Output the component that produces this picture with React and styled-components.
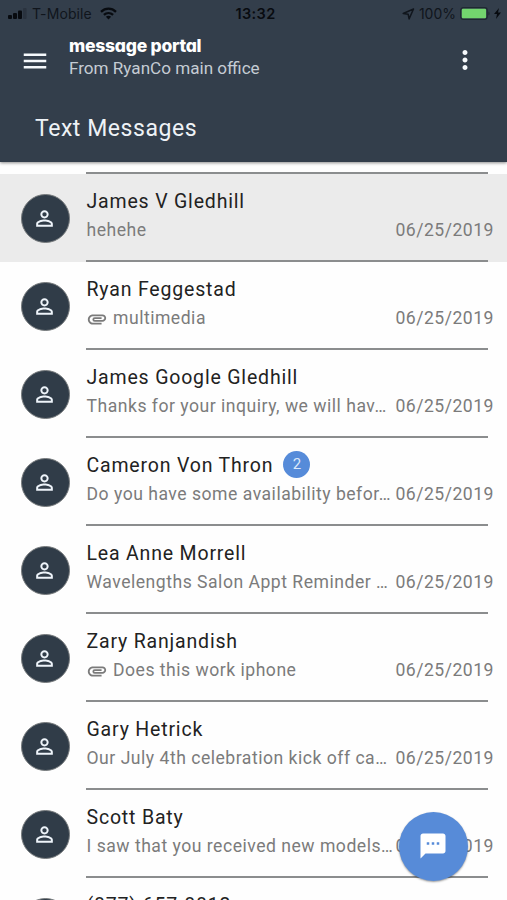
import React from 'react';
import styled, { createGlobalStyle } from 'styled-components';
import { MdAttachment, MdMenu, MdMoreVert, MdPersonOutline, MdSms } from 'react-icons/md';

const GlobalStyle = createGlobalStyle`
  * {
    box-sizing: border-box;
  }

  body {
    margin: 0;
    background: #fefefe;
    font-family: Roboto, sans-serif;
    overflow: hidden;
  }
`;

const Screen = styled.main`
  position: relative;
  height: 900px;
  overflow: hidden;
`;

const Header = styled.header`
  height: 162px;
  background: #333e4b;
  box-shadow: 0 1px 3px rgba(0, 0, 0, 0.45);
`;

const StatusBar = styled.div`
  display: grid;
  grid-template-columns: 1fr auto 1fr;
  align-items: center;
  height: 27px;
  padding: 0 6px 0 8px;
  color: #10151c;
  font-family: Inter, sans-serif;
  font-size: 14px;
`;

const StatusGroup = styled.div`
  display: flex;
  align-items: center;
  justify-content: ${(props) => (props.$end ? 'flex-end' : 'flex-start')};
  gap: ${(props) => (props.$end ? '4px' : '6px')};
`;

const Carrier = styled.span`
  margin: 0 2px 0 -1px;
  letter-spacing: 0.1px;
`;

const Clock = styled.span`
  padding-left: 2px;
  color: #080b10;
  font-weight: 600;
  font-size: 14.5px;
  letter-spacing: 0.4px;
`;

const AppBar = styled.div`
  display: flex;
  align-items: center;
  height: 67px;
  padding: 0 27px 0 20px;
  color: #fff;
`;

const IconButton = styled.button`
  display: flex;
  padding: ${(props) => (props.$raised ? '0 0 2px' : '0')};
  border: 0;
  background: none;
  color: #f6f9fc;
  font-size: 30px;
`;

const Brand = styled.div`
  flex: 1;
  padding: 0 0 6px 19px;
`;

const BrandName = styled.div`
  font-family: Inter, sans-serif;
  font-feature-settings: 'cv11';
  font-size: 17.5px;
  font-weight: 800;
  line-height: 20px;
  letter-spacing: -0.25px;
`;

const BrandOffice = styled.div`
  color: #c5ccd4;
  font-size: 17.1px;
  line-height: 24px;
`;

const Title = styled.h1`
  margin: 0;
  padding: 19px 35px 0;
  color: #eef2f6;
  font-size: 23px;
  font-weight: 400;
  line-height: 32px;
  letter-spacing: 0.55px;
`;

const List = styled.ul`
  margin: 0;
  padding: 10px 0 0;
  list-style: none;
`;

const Divider = styled.div`
  height: 2px;
  margin: 0 19px 0 86px;
  background: #8b8d8e;
`;

const Row = styled.li`
  background: ${(props) => (props.$active ? '#ebebeb' : 'transparent')};
`;

const RowBody = styled.div`
  display: flex;
  align-items: center;
  height: 86px;
  padding: 0 13px 0 20.5px;
`;

const Avatar = styled.div`
  display: flex;
  flex: none;
  align-items: center;
  justify-content: center;
  width: 49px;
  height: 49px;
  margin: 2px 17px 0 0;
  padding-right: 1px;
  border: 1px solid #777b7d;
  border-radius: 50%;
  background: #303c48;
  color: #eef4fa;
  font-size: 25px;
`;

const Content = styled.div`
  flex: 1;
  min-width: 0;
  padding-bottom: 4px;
`;

const NameLine = styled.div`
  display: flex;
  align-items: center;
  height: 30px;
`;

const Name = styled.span`
  color: #222;
  font-size: 19.5px;
  letter-spacing: 0.82px;
`;

const Badge = styled.span`
  width: 27px;
  height: 27px;
  margin: -2px 0 0 10px;
  border-radius: 50%;
  background: #568bd9;
  color: #dce8fa;
  font-size: 15px;
  line-height: 27px;
  text-align: center;
`;

const PreviewLine = styled.div`
  display: flex;
  align-items: center;
  height: 28px;
  color: #7b7b7b;
  font-size: 17.6px;
  letter-spacing: 0.5px;
`;

const Clip = styled(MdAttachment)`
  flex: none;
  margin: 2px 5px 0 -0.5px;
  font-size: 22px;
`;

const Preview = styled.span`
  flex: 1;
  min-width: 0;
  white-space: nowrap;
`;

const SentOn = styled.time`
  flex: none;
`;

const Compose = styled.button`
  position: absolute;
  top: 812px;
  left: 399px;
  display: flex;
  align-items: center;
  justify-content: center;
  width: 69px;
  height: 69px;
  padding: 0 1px 1px 0;
  border: 0;
  border-radius: 50%;
  background: #578bd8;
  box-shadow: 0 1px 2px rgba(0, 0, 0, 0.4);
  color: #fff;
  font-size: 30px;
`;

const messages = [
  { name: 'James V Gledhill', text: 'hehehe', date: '06/25/2019', active: true },
  { name: 'Ryan Feggestad', text: 'multimedia', date: '06/25/2019', clip: true },
  { name: 'James Google Gledhill', text: 'Thanks for your inquiry, we will hav…', date: '06/25/2019' },
  { name: 'Cameron Von Thron', text: 'Do you have some availability befor…', date: '06/25/2019', unread: 2 },
  { name: 'Lea Anne Morrell', text: 'Wavelengths Salon Appt Reminder …', date: '06/25/2019' },
  { name: 'Zary Ranjandish', text: 'Does this work iphone', date: '06/25/2019', clip: true },
  { name: 'Gary Hetrick', text: 'Our July 4th celebration kick off ca…', date: '06/25/2019' },
  { name: 'Scott Baty', text: 'I saw that you received new models…', date: '06/25/2019' },
  { name: '(877) 657-8812' },
];

function SignalIcon() {
  return (
    <svg width="19" height="12" viewBox="0 0 19 12" fill="#080b10">
      <rect x="0" y="7" width="4" height="4" rx="1" />
      <rect x="5" y="5" width="4" height="6" rx="1" />
      <rect x="10" y="2.5" width="4" height="8.5" rx="1" />
      <rect x="15" y="0" width="3.6" height="11" rx="1" opacity="0.2" />
    </svg>
  );
}

function WifiIcon() {
  return (
    <svg width="17" height="13" viewBox="0 0 17 13" fill="none" stroke="#080b10" strokeWidth="2.3">
      <path d="M1 4.8C5.4.6 11.6.6 16 4.8" />
      <path d="M3.9 7.9c2.7-2.5 6.5-2.5 9.2 0" />
      <path d="M5.9 9.8c1.5-1.3 3.7-1.3 5.2 0L8.5 12.5z" fill="#080b10" stroke="none" />
    </svg>
  );
}

function LocationIcon() {
  return (
    <svg width="13" height="12" viewBox="0 0 13 12" fill="none" stroke="#10151c" strokeWidth="1.5" strokeLinejoin="round">
      <path d="M11.5 1 1.2 5.5l5 .8.9 4.6z" />
    </svg>
  );
}

function BatteryIcon() {
  return (
    <svg width="30" height="13" viewBox="0 0 30 13">
      <rect x="0.7" y="0.7" width="26.5" height="11.6" rx="2.5" fill="none" stroke="#1f2831" strokeWidth="1.2" />
      <rect x="1.8" y="1.8" width="24.3" height="9.4" rx="1.2" fill="#73d56e" />
      <path d="M28.4 4.5c1.5.6 1.5 3.4 0 4z" fill="#1f2831" />
    </svg>
  );
}

function BoltIcon() {
  return (
    <svg width="7" height="11" viewBox="0 0 7 11" fill="#080b10">
      <path d="M5 0 0 6h3L2 11l5-6.4H4z" />
    </svg>
  );
}

function MessageRow({ message }) {
  return (
    <Row $active={message.active}>
      <RowBody>
        <Avatar>
          <MdPersonOutline />
        </Avatar>
        <Content>
          <NameLine>
            <Name>{message.name}</Name>
            {message.unread && <Badge>{message.unread}</Badge>}
          </NameLine>
          <PreviewLine>
            {message.clip && <Clip />}
            <Preview>{message.text}</Preview>
            {message.date && <SentOn>{message.date}</SentOn>}
          </PreviewLine>
        </Content>
      </RowBody>
      <Divider />
    </Row>
  );
}

export default function App() {
  return (
    <Screen>
      <GlobalStyle />
      <Header>
        <StatusBar>
          <StatusGroup>
            <SignalIcon />
            <Carrier>T-Mobile</Carrier>
            <WifiIcon />
          </StatusGroup>
          <Clock>13:32</Clock>
          <StatusGroup $end>
            <LocationIcon />
            <span>100%</span>
            <BatteryIcon />
            <BoltIcon />
          </StatusGroup>
        </StatusBar>
        <AppBar>
          <IconButton aria-label="Menu">
            <MdMenu />
          </IconButton>
          <Brand>
            <BrandName>message portal</BrandName>
            <BrandOffice>From RyanCo main office</BrandOffice>
          </Brand>
          <IconButton $raised aria-label="More">
            <MdMoreVert />
          </IconButton>
        </AppBar>
        <Title>Text Messages</Title>
      </Header>
      <List>
        <Divider as="li" />
        {messages.map((message) => (
          <MessageRow key={message.name} message={message} />
        ))}
      </List>
      <Compose aria-label="New message">
        <MdSms />
      </Compose>
    </Screen>
  );
}
